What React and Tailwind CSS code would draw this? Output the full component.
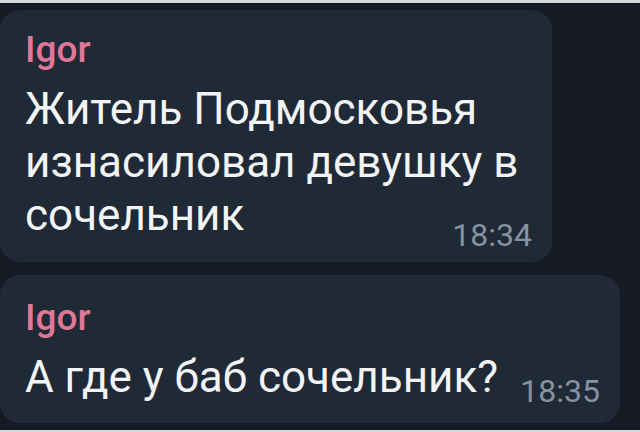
const font = { fontFamily: 'Roboto, "Noto Sans", sans-serif' };

function Bubble({ width, lines, time, timeShift, padTop, padBottom }) {
  const last = lines[lines.length - 1];
  return (
    <div
      className={`${width} rounded-[20px] bg-[#202a36] pl-[25px] pr-[20px] ${padTop} ${padBottom}`}
    >
      <div className="text-[37px] leading-[40px] font-medium text-[#df7797]">Igor</div>
      <div className="mt-[13px] text-[44px] leading-[53px] text-[#f2f4f6]">
        {lines.slice(0, -1).map((line) => (
          <div key={line} className="whitespace-nowrap">
            {line}
          </div>
        ))}
        {/* last line shares its row with the time */}
        <div className="flex items-baseline justify-between">
          <span className="whitespace-nowrap">{last}</span>
          <span className={`text-[32px] leading-[32px] text-[#8792a0] ${timeShift}`}>
            {time}
          </span>
        </div>
      </div>
    </div>
  );
}

export default function App() {
  return (
    <div className="w-[640px] h-[432px] overflow-hidden bg-[#151a24] flex flex-col" style={font}>
      <div className="h-[3px] bg-[#d6d7d9]" />
      <div className="flex flex-col gap-[13px] pt-[7px]">
        <Bubble
          width="w-[552px]"
          lines={['Житель Подмосковья', 'изнасиловал девушку в', 'сочельник']}
          time="18:34"
          timeShift="translate-y-[16px]"
          padTop="pt-[20px]"
          padBottom="pb-[20px]"
        />
        <Bubble
          width="w-[620px]"
          lines={['А где у баб сочельник?']}
          time="18:35"
          timeShift="translate-y-[10px]"
          padTop="pt-[23px]"
          padBottom="pb-[19px]"
        />
      </div>
      <div className="mt-auto h-[2px] bg-[#d6d7d9]" />
    </div>
  );
}
